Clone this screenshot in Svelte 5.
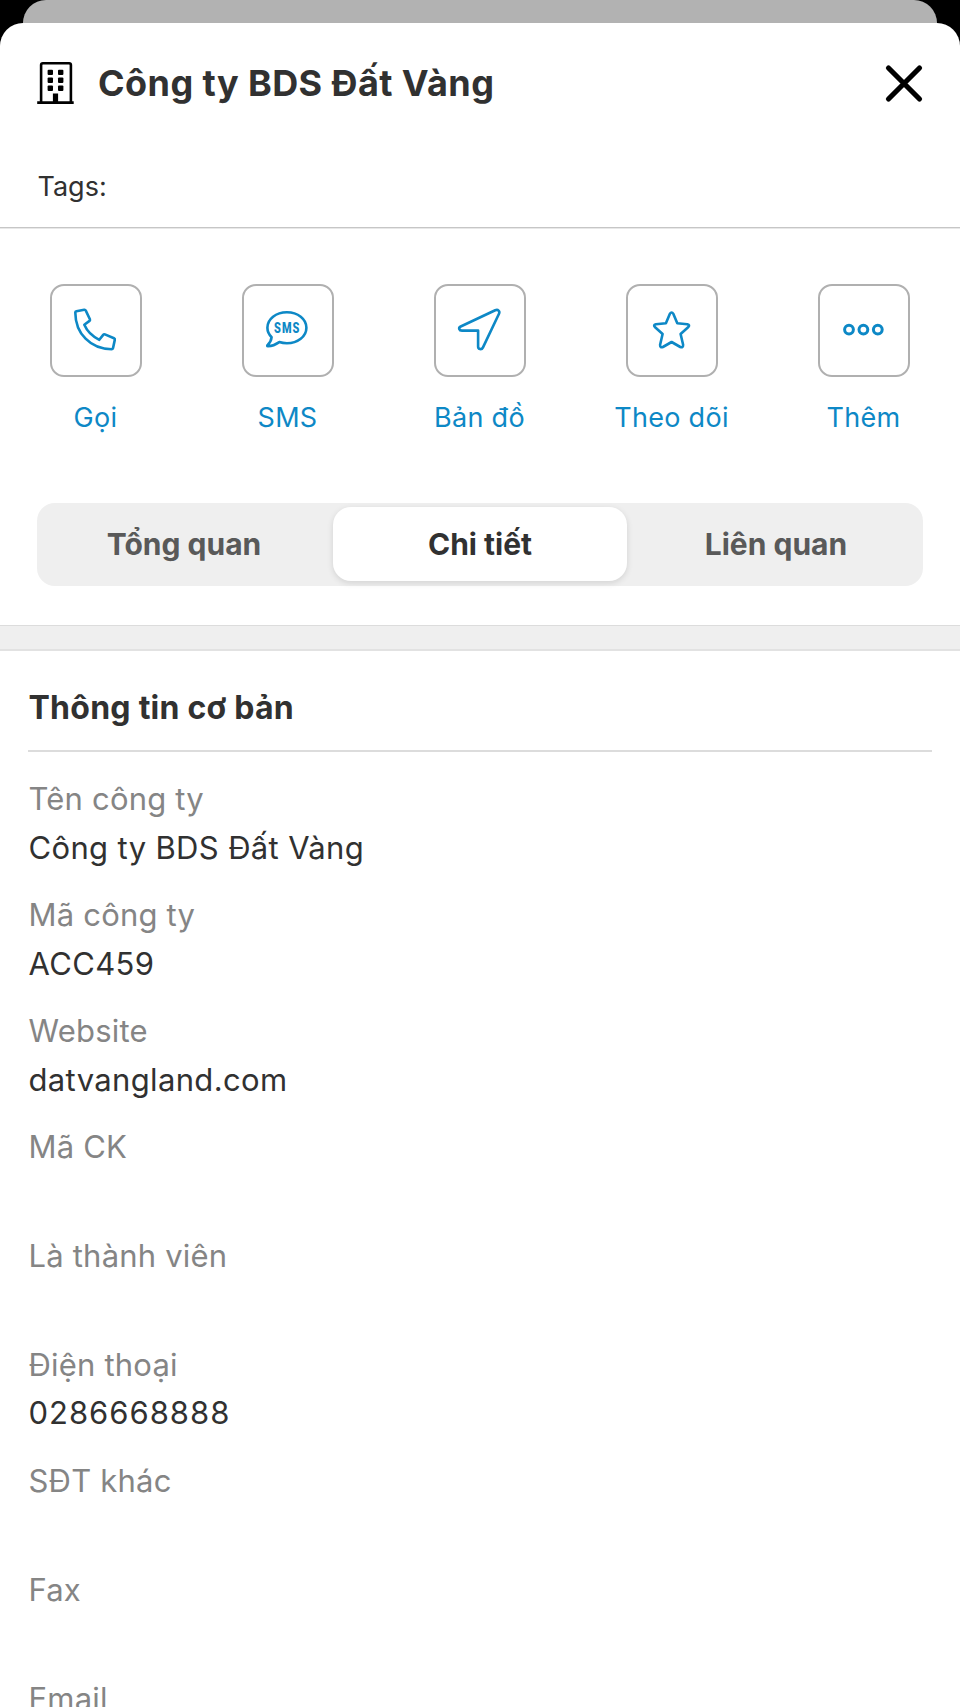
<script>
  let {
    company = 'Công ty BDS Đất Vàng',
    onClose,
  } = $props()

  const actions = [
    { id: 'call', label: 'Gọi' },
    { id: 'sms', label: 'SMS' },
    { id: 'map', label: 'Bản đồ' },
    { id: 'follow', label: 'Theo dõi' },
    { id: 'more', label: 'Thêm' },
  ]

  const tabs = ['Tổng quan', 'Chi tiết', 'Liên quan']
  let activeTab = $state('Chi tiết')

  const fields = [
    { label: 'Tên công ty', value: 'Công ty BDS Đất Vàng' },
    { label: 'Mã công ty', value: 'ACC459' },
    { label: 'Website', value: 'datvangland.com' },
    { label: 'Mã CK', value: '' },
    { label: 'Là thành viên', value: '' },
    { label: 'Điện thoại', value: '0286668888', numeric: true },
    { label: 'SĐT khác', value: '' },
    { label: 'Fax', value: '' },
    { label: 'Email', value: '' },
  ]
</script>

<div class="screen">
  <div class="behind"></div>
  <div class="sheet">
    <header>
      <svg class="building" viewBox="0 0 38 44" width="38" height="44">
        <path d="M5.1 41V4a1.8 1.8 0 0 1 1.8-1.8h26.2A1.8 1.8 0 0 1 34.9 4v37" fill="none" stroke="#000" stroke-width="2.6" />
        <path d="M1.2 40.2h36.5v2.8H1.2zM16.9 32.5h5.2v9h-5.2z" />
        {#each [8.7, 16.6, 24.5] as y}
          <rect x="11.6" {y} width="5.4" height="5.4" rx="1" />
          <rect x="22" {y} width="5.4" height="5.4" rx="1" />
        {/each}
      </svg>
      <h1>{company}</h1>
      <button class="close" onclick={() => onClose?.()} aria-label="Đóng">
        <svg viewBox="0 0 40 40" width="40" height="40"><path d="M4.5 5l31 31M35.5 5l-31 31" stroke="#000" stroke-width="5.2" stroke-linecap="round" /></svg>
      </button>
    </header>

    <div class="tags">Tags:</div>

    <nav class="actions">
      {#each actions as action (action.id)}
        <button class="action">
          <span class="box">
            <svg viewBox="0 0 48 48" width="48" height="48">
              {#if action.id === 'call'}
                <path d="M4.4 5.2L12.2 3.8Q13.3 3.6 13.8 4.6L17.9 13.2Q18.3 14.2 17.5 14.9L12.3 18.8Q16.5 28.5 27.3 33.8L31.2 28.9Q31.9 28 32.9 28.4L42 32.3Q43.1 32.8 42.8 33.9L41 42.2Q40.7 43.2 39.6 43.2C18.5 43.2 3.4 27.5 3.3 6.4Q3.3 5.4 4.4 5.2Z" />
              {:else if action.id === 'sms'}
                <path d="M7.6 31.2C4.9 28.6 3.4 25.4 3.4 21.8C3.4 13 12 6.3 22.9 6.3S42.4 13 42.4 21.8S33.8 37.3 22.9 37.3C20.2 37.3 17.6 36.9 15.3 36.1C12 38.4 8 40.1 4 40.3Q2.6 40.2 3.7 39C5.9 36.8 7.3 34.4 7.6 31.2Z" />
                <text transform="translate(10 27) scale(0.78 1)">SMS</text>
              {:else if action.id === 'map'}
                <path d="M4.7 20.5L39.2 4.3C42 3 44.2 5.2 43 7.8L27 41.4C25.6 44.2 22.1 43.4 22.1 40.5V24.6H6C3 24.6 2.1 21.7 4.7 20.5Z" />
              {:else if action.id === 'follow'}
                <path d="M21.8 7.9Q23.6 5.2 25.4 7.9L29.3 17.2L39.3 18.2Q42.4 19 40.1 21.3L32.6 28L35.1 38.8Q35.2 42 32.3 41L23.6 36L14.9 41Q12 42 12.1 38.8L14.6 28L7.1 21.3Q4.8 19 7.9 18.2L17.9 17.2Z" />
              {:else}
                <g stroke-width="3">
                  <circle cx="9" cy="23.6" r="4.4" />
                  <circle cx="23.4" cy="23.6" r="4.4" />
                  <circle cx="37.8" cy="23.6" r="4.4" />
                </g>
              {/if}
            </svg>
          </span>
          <span class="caption">{action.label}</span>
        </button>
      {/each}
    </nav>

    <div class="tabs" role="tablist">
      {#each tabs as tab}
        <button
          role="tab"
          aria-selected={tab === activeTab}
          class:active={tab === activeTab}
          onclick={() => (activeTab = tab)}
        >{tab}</button>
      {/each}
    </div>

    <div class="band"></div>

    <section>
      <h2>Thông tin cơ bản</h2>
      <dl>
        {#each fields as field}
          <div class="field" class:empty={!field.value}>
            <dt>{field.label}</dt>
            <dd class:numeric={field.numeric}>{field.value}</dd>
          </div>
        {/each}
      </dl>
    </section>
  </div>
</div>

<style>
  :global(body) {
    margin: 0;
    background: #000;
  }
  .screen {
    width: 960px;
    height: 1707px;
    overflow: hidden;
    background: #000;
    font-family: Inter, 'Liberation Sans', sans-serif;
    color: #313131;
  }
  button {
    padding: 0;
    border: 0;
    background: none;
    font: inherit;
    color: inherit;
  }
  .behind {
    height: 23px;
    margin: 0 23px;
    background: #b2b2b2;
    border-radius: 23px 23px 0 0;
  }
  .sheet {
    height: 1684px;
    background: #fff;
    border-radius: 23px 23px 0 0;
    overflow: hidden;
  }

  header {
    display: flex;
    align-items: center;
    height: 120px;
    padding: 0 36px;
    box-sizing: border-box;
  }
  .building { flex: none; }
  h1 {
    flex: 1;
    margin: 0 0 0 24px;
    font-size: 36px;
    line-height: 44px;
    font-weight: 700;
    letter-spacing: 0.42px;
  }
  .close {
    width: 40px;
    height: 40px;
  }
  .close svg, .box svg { display: block; }

  .tags {
    height: 85px;
    padding: 27px 37.5px 0;
    box-sizing: border-box;
    border-bottom: 1px solid #c6c6c6;
    box-shadow: 0 1px #e8e8e8;
    font-size: 27px;
    line-height: 33px;
  }

  .actions {
    display: grid;
    grid-template-columns: repeat(5, 1fr);
    padding-top: 56px;
  }
  .action {
    display: flex;
    flex-direction: column;
    align-items: center;
    color: #0d88c6;
  }
  .box {
    display: flex;
    align-items: center;
    justify-content: center;
    width: 92.5px;
    height: 92.5px;
    box-sizing: border-box;
    border: 2px solid #b0b0b0;
    border-radius: 14px;
  }
  .box svg {
    fill: none;
    stroke: #0d88c6;
    stroke-width: 2.6;
    stroke-linejoin: round;
  }
  .box text {
    fill: #0d88c6;
    stroke: none;
    font-family: Roboto, sans-serif;
    font-size: 14px;
    font-weight: 900;
    letter-spacing: 1.4px;
  }
  .caption {
    margin-top: 24px;
    margin-left: -1px;
    font-size: 27px;
    line-height: 33px;
    letter-spacing: 0.3px;
  }

  .tabs {
    display: flex;
    height: 83px;
    margin: 69.5px 37px 0;
    padding: 4px 0;
    box-sizing: border-box;
    border-radius: 18px;
    background: #efefef;
  }
  .tabs button {
    flex: 1;
    height: 74px;
    border-radius: 18px;
    font-size: 30px;
    font-weight: 700;
    color: #595959;
  }
  .tabs button.active {
    margin: 0 2px;
    background: #fff;
    color: #313131;
    box-shadow: 0 2px 6px rgba(0, 0, 0, 0.12);
  }

  .band {
    height: 26px;
    margin-top: 39px;
    box-sizing: border-box;
    background: #efefef;
    border-top: 1px solid #dcdcdc;
    border-bottom: 2px solid #e2e2e2;
  }

  section { padding: 0 28px; }
  h2 {
    height: 101px;
    margin: 0;
    padding-top: 37px;
    padding-left: 0.5px;
    box-sizing: border-box;
    border-bottom: 2px solid #dcdcdc;
    font-size: 32px;
    line-height: 40px;
    font-weight: 700;
    letter-spacing: 0.25px;
  }
  dl { margin: 27px 0 0; }
  .field {
    height: 116px;
    padding-left: 0.5px;
  }
  .field.empty { height: 108.9px; }
  dt, dd {
    margin: 0;
    font-size: 31px;
    line-height: 40px;
  }
  dt {
    color: #858585;
    letter-spacing: 0.2px;
  }
  dd {
    margin-top: 8.5px;
    letter-spacing: 0.35px;
  }
  dd.numeric { letter-spacing: 0.98px; }
</style>
